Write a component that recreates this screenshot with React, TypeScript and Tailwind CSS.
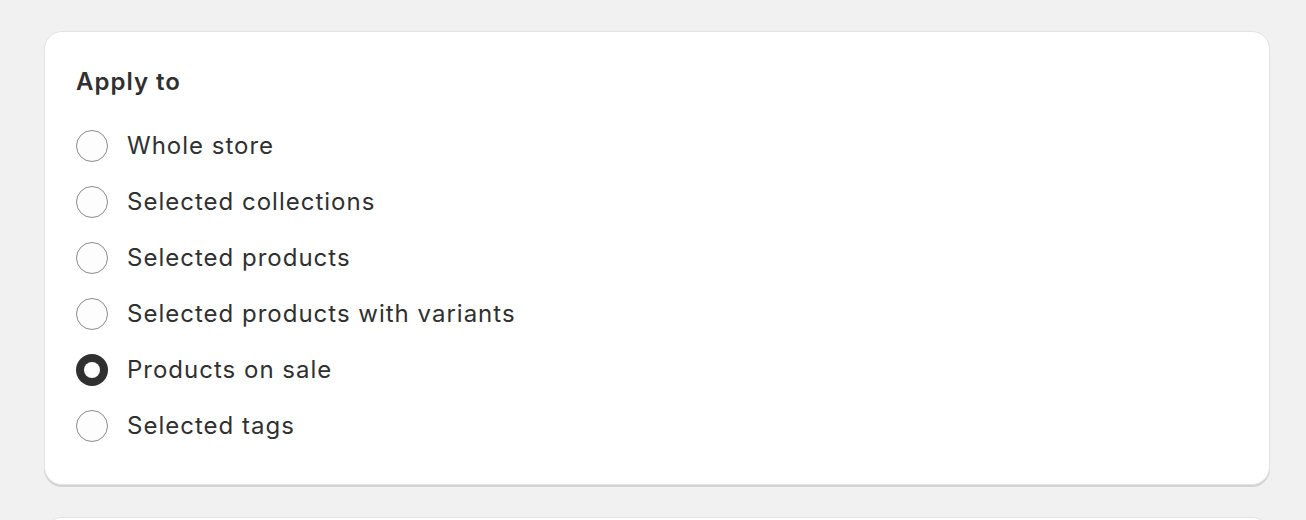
import { useState } from "react";

const options = [
  "Whole store",
  "Selected collections",
  "Selected products",
  "Selected products with variants",
  "Products on sale",
  "Selected tags",
];

const Radio = ({ checked }: { checked: boolean }) =>
  checked ? (
    <span className="flex h-8 w-8 shrink-0 items-center justify-center rounded-full bg-[#303030]">
      <span className="h-4 w-4 rounded-full bg-white" />
    </span>
  ) : (
    <span className="h-8 w-8 shrink-0 rounded-full border-[1.5px] border-[#8a8a8a] bg-[#fdfdfd]" />
  );

export default function App() {
  const [selected, setSelected] = useState("Products on sale");

  return (
    <div
      className="h-[520px] overflow-hidden bg-[#f1f1f1] pt-[31px] text-[#303030]"
      style={{ fontFamily: "Inter, 'Noto Sans', sans-serif" }}
    >
      <div className="ml-[44px] w-[1226px] rounded-[18px] border border-[#e3e3e3] bg-white px-[31px] pt-[34px] pb-[30px] shadow-[0_2px_0_rgba(0,0,0,0.12)]">
        <h2 className="text-[24px] leading-8 font-semibold tracking-[1px]">
          Apply to
        </h2>
        <div className="mt-5 flex flex-col">
          {options.map((option) => (
            <label
              key={option}
              className="flex h-14 cursor-pointer items-center gap-[19px]"
              onClick={() => setSelected(option)}
            >
              <Radio checked={selected === option} />
              <span className="text-[24px] leading-8 tracking-[1px]">
                {option}
              </span>
            </label>
          ))}
        </div>
      </div>
      <div className="mt-[32px] ml-[44px] h-10 w-[1226px] rounded-t-[18px] border border-[#e3e3e3] bg-white" />
    </div>
  );
}
